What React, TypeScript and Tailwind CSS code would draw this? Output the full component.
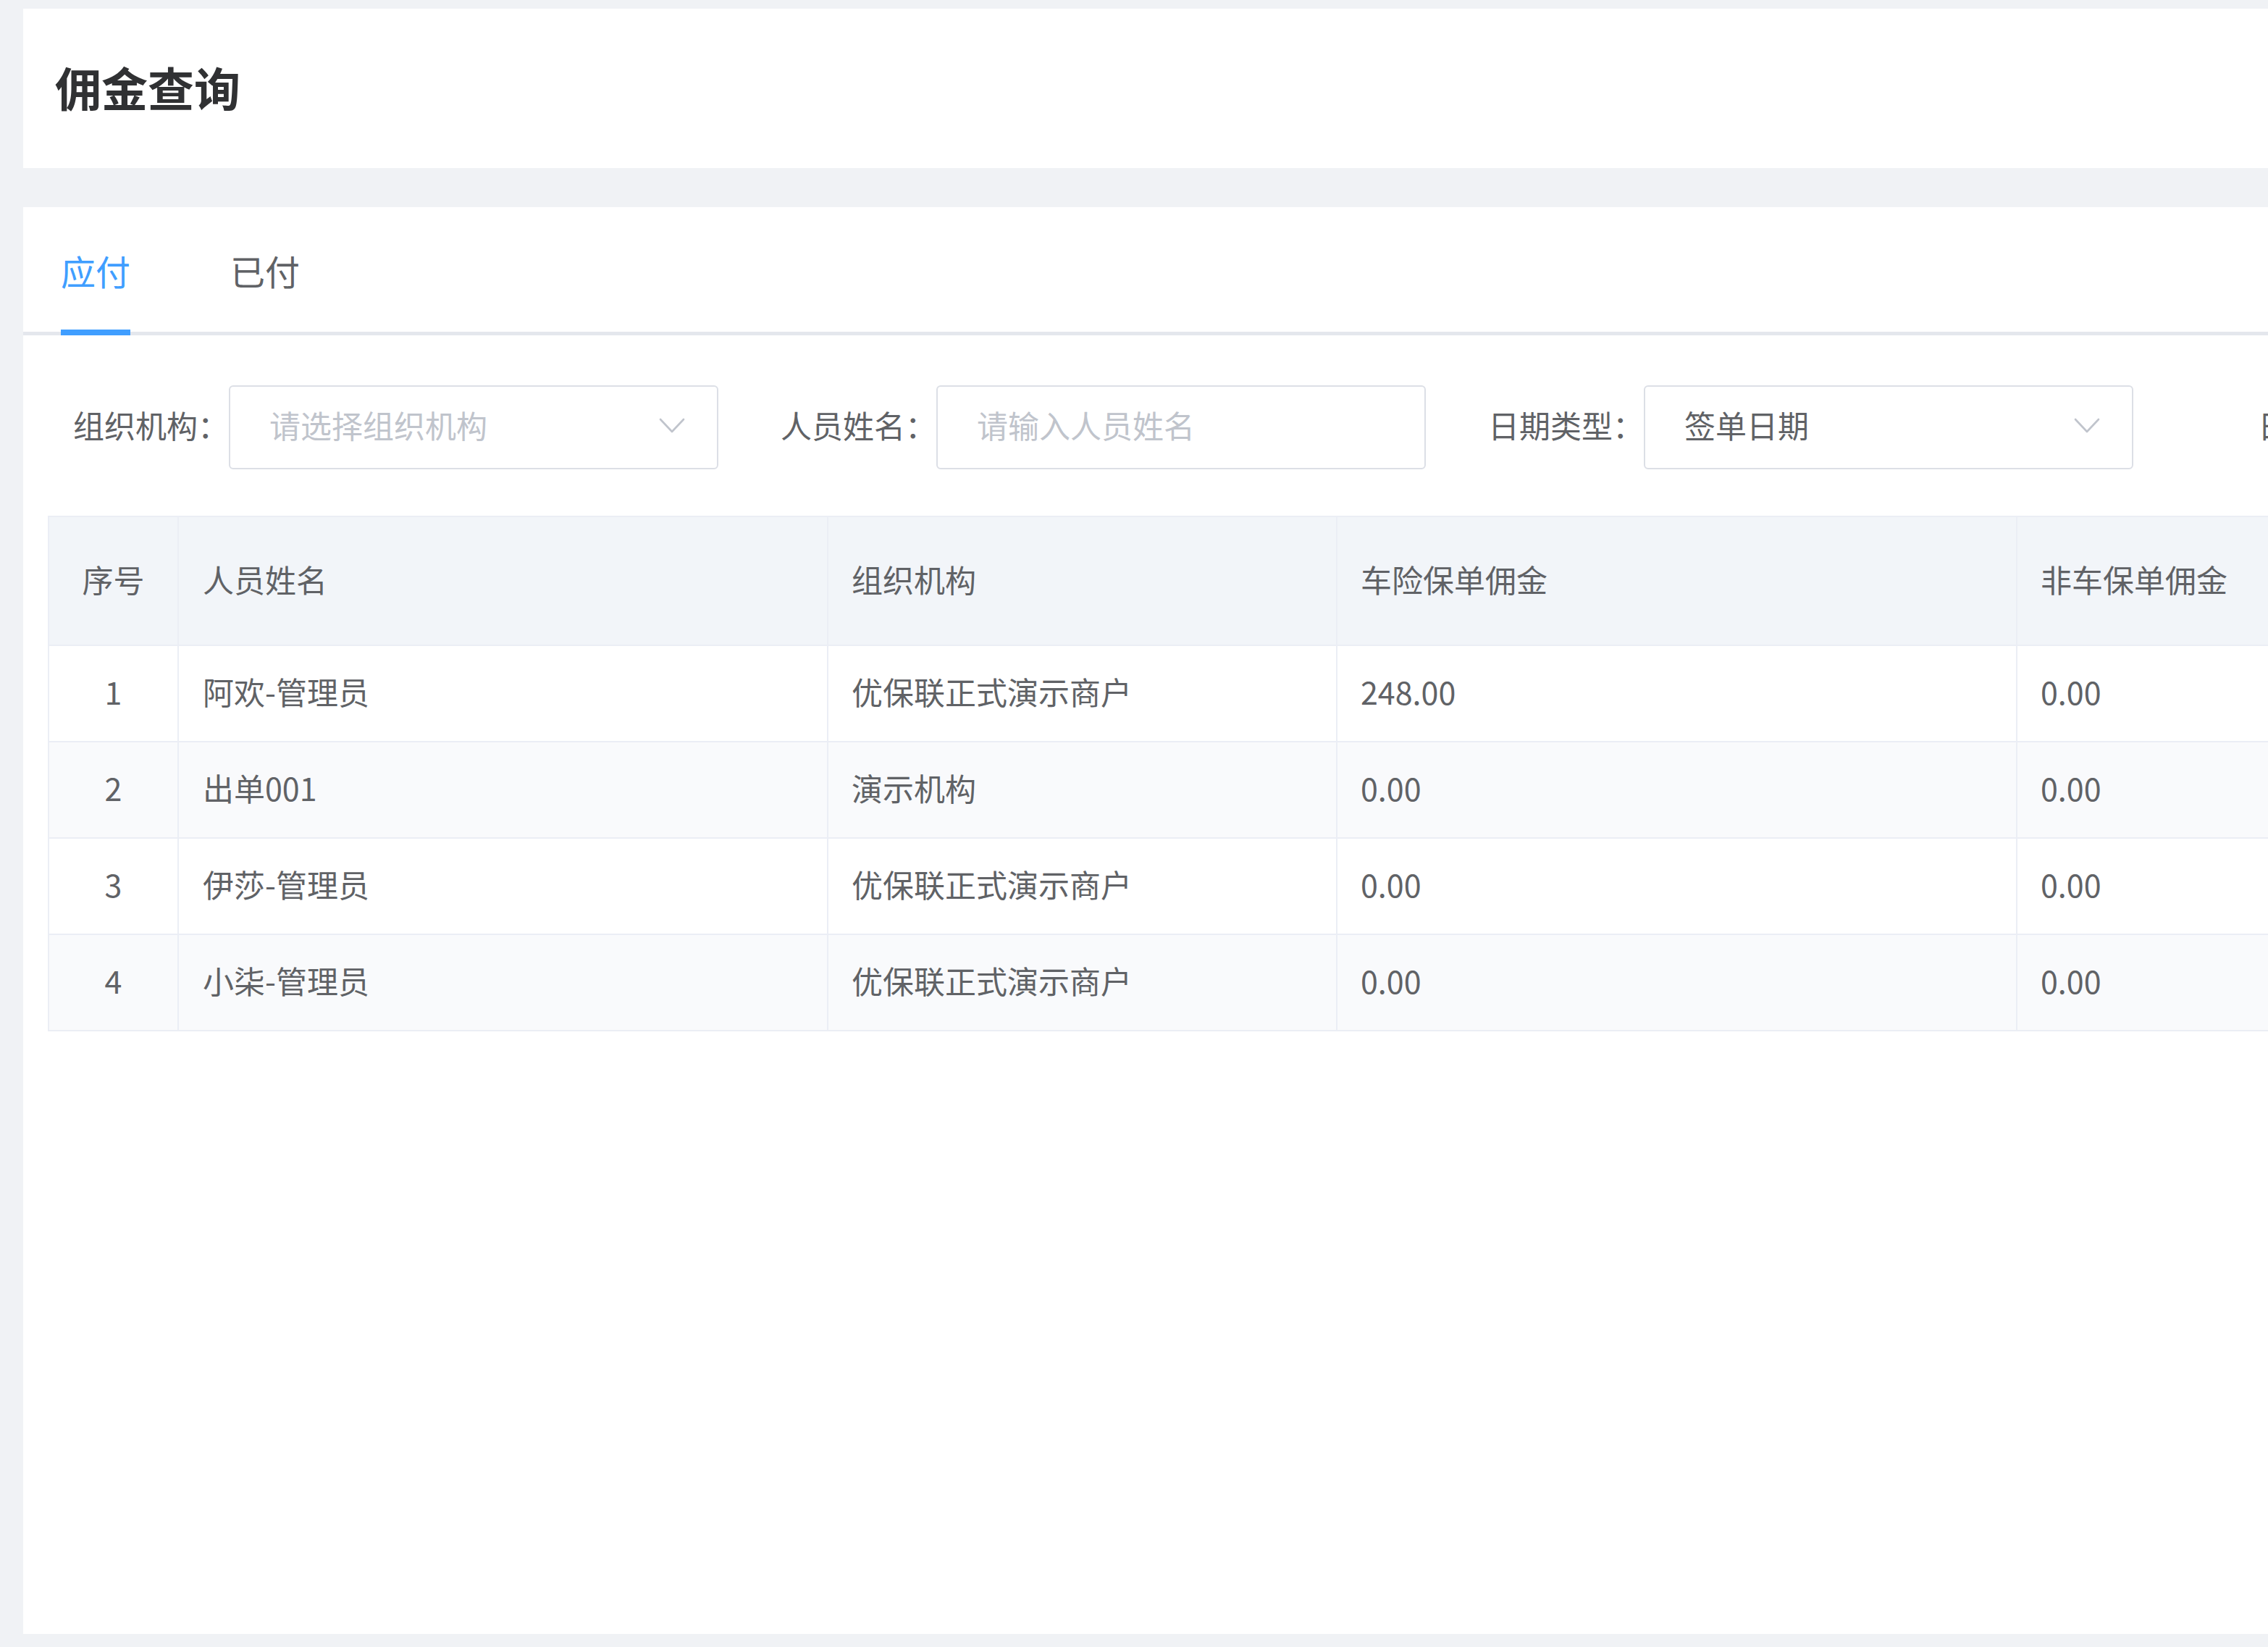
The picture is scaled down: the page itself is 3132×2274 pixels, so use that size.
import React from "react";

const rows = [
  { no: 1, name: "阿欢-管理员", org: "优保联正式演示商户", car: "248.00", nonCar: "0.00" },
  { no: 2, name: "出单001", org: "演示机构", car: "0.00", nonCar: "0.00" },
  { no: 3, name: "伊莎-管理员", org: "优保联正式演示商户", car: "0.00", nonCar: "0.00" },
  { no: 4, name: "小柒-管理员", org: "优保联正式演示商户", car: "0.00", nonCar: "0.00" },
];

function Chevron() {
  return (
    <svg width="36" height="22" viewBox="0 0 36 22" fill="none">
      <polyline points="2,2 18,19 34,2" stroke="#c0c4cc" strokeWidth="2.6" strokeLinecap="round" strokeLinejoin="round" />
    </svg>
  );
}

function Label({ text }: { text: string }) {
  return <div className="w-[215px] shrink-0 text-right text-[43px] text-[#606266] leading-none pb-[8px]">{text}</div>;
}

function App() {
  return (
    <div className="min-h-screen bg-[#f0f2f5] pl-[32px] pt-[12px] pb-[18px] flex flex-col gap-[54px] font-['Noto_Sans_CJK_SC','Liberation_Sans',sans-serif] overflow-hidden">
      {/* page header */}
      <div className="h-[220px] bg-white flex items-center pl-[44px] shrink-0">
        <h1 className="text-[64px] font-bold text-[#303133] leading-none pb-[6px]">佣金查询</h1>
      </div>

      {/* main card */}
      <div className="flex-1 bg-white overflow-hidden">
        {/* tabs */}
        <div className="h-[177px] border-b-[5px] border-[#e4e7ed] flex pl-[52px] gap-[138px]">
          <div className="relative h-[172px] flex items-center pt-[2px] text-[48px] text-[#409eff] leading-none">
            应付
            <div className="absolute left-0 right-0 bottom-[-5px] h-[8px] bg-[#409eff]" />
          </div>
          <div className="h-[172px] flex items-center pt-[2px] text-[48px] text-[#606266] leading-none">已付</div>
        </div>

        {/* filters */}
        <div className="mt-[69px] h-[116px] flex items-center pl-[69px] whitespace-nowrap">
          <Label text="组织机构：" />
          <div className="w-[676px] h-[116px] shrink-0 border-2 border-[#dcdfe6] rounded-[6px] flex items-center justify-between pl-[54px] pr-[44px]">
            <span className="text-[43px] text-[#c0c4cc] leading-none pb-[8px]">请选择组织机构</span>
            <span className="pb-[4px]"><Chevron /></span>
          </div>
          <div className="w-[86px] shrink-0" />
          <Label text="人员姓名：" />
          <div className="w-[676px] h-[116px] shrink-0 border-2 border-[#dcdfe6] rounded-[6px] flex items-center pl-[54px]">
            <span className="text-[43px] text-[#c0c4cc] leading-none pb-[8px]">请输入人员姓名</span>
          </div>
          <div className="w-[86px] shrink-0" />
          <Label text="日期类型：" />
          <div className="w-[676px] h-[116px] shrink-0 border-2 border-[#dcdfe6] rounded-[6px] flex items-center justify-between pl-[54px] pr-[44px]">
            <span className="text-[43px] text-[#606266] leading-none pb-[8px]">签单日期</span>
            <span className="pb-[4px]"><Chevron /></span>
          </div>
          <div className="w-[86px] shrink-0" />
          <Label text="日期：" />
        </div>

        {/* table */}
        <div className="mt-[64px] ml-[34px] w-[3500px] border-t-2 border-l-2 border-[#ebeef5] text-[43px] text-[#606266] leading-none">
          <div className="flex h-[178px] bg-[#f2f5f9] border-b-2 border-[#ebeef5]">
            <div className="w-[179px] shrink-0 border-r-2 border-[#ebeef5] flex items-center justify-center pb-[6px]">序号</div>
            <div className="w-[897px] shrink-0 border-r-2 border-[#ebeef5] flex items-center pl-[33px] pb-[6px]">人员姓名</div>
            <div className="w-[703px] shrink-0 border-r-2 border-[#ebeef5] flex items-center pl-[32px] pb-[6px]">组织机构</div>
            <div className="w-[939px] shrink-0 border-r-2 border-[#ebeef5] flex items-center pl-[32px] pb-[6px]">车险保单佣金</div>
            <div className="w-[700px] shrink-0 border-r-2 border-[#ebeef5] flex items-center pl-[32px] pb-[6px]">非车保单佣金</div>
          </div>
          {rows.map((r, idx) => (
            <div key={r.no} className={`flex h-[133px] border-b-2 border-[#ebeef5] ${idx % 2 === 1 ? "bg-[#f9fafc]" : "bg-white"}`}>
              <div className="w-[179px] shrink-0 border-r-2 border-[#ebeef5] flex items-center justify-center pb-[6px]">{r.no}</div>
              <div className="w-[897px] shrink-0 border-r-2 border-[#ebeef5] flex items-center pl-[33px] pb-[6px]">{r.name}</div>
              <div className="w-[703px] shrink-0 border-r-2 border-[#ebeef5] flex items-center pl-[32px] pb-[6px]">{r.org}</div>
              <div className="w-[939px] shrink-0 border-r-2 border-[#ebeef5] flex items-center pl-[32px] pb-[6px]">{r.car}</div>
              <div className="w-[700px] shrink-0 border-r-2 border-[#ebeef5] flex items-center pl-[32px] pb-[6px]">{r.nonCar}</div>
            </div>
          ))}
        </div>
      </div>
    </div>
  );
}

export default App;
